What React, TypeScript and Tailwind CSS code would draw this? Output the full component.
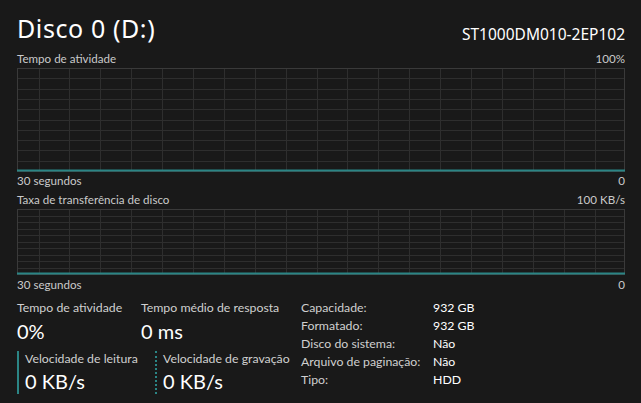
import React from 'react';

const FONT = { fontFamily: 'Lato, "Noto Sans", sans-serif' };
const HEAD = { fontFamily: '"Noto Sans", "Open Sans", sans-serif' };

interface GraphProps {
  height: number;
  rows: number;
}

const Graph: React.FC<GraphProps> = ({ height, rows }) => {
  const width = 608;
  const cols: number[] = [];
  for (let x = 21.5; x < width - 2; x += 30.9) cols.push(Math.round(x) + 0.5);
  const step = (height - 1) / rows;
  const lines: number[] = [];
  for (let i = 1; i < rows; i++) lines.push(Math.round(i * step) + 0.5);

  return (
    <svg width={width} height={height} className="block">
      {cols.map((x) => (
        <line key={'c' + x} x1={x} y1={0} x2={x} y2={height} stroke="#2e2e2e" strokeWidth={1} />
      ))}
      {lines.map((y) => (
        <line key={'r' + y} x1={0} y1={y} x2={width} y2={y} stroke="#2e2e2e" strokeWidth={1} />
      ))}
      <rect x={0.5} y={0.5} width={width - 1} height={height - 1} fill="none" stroke="#3a3a3a" strokeWidth={1} />
      <line x1={0} y1={height - 1.5} x2={width} y2={height - 1.5} stroke="#2b8585" strokeWidth={2} />
    </svg>
  );
};

const Caption: React.FC<{ left: string; right: string; className?: string }> = ({ left, right, className }) => (
  <div className={`flex justify-between text-[11.6px] leading-[14px] text-[#cacaca] ${className ?? ''}`}>
    <span>{left}</span>
    <span>{right}</span>
  </div>
);

const details: [string, string][] = [
  ['Capacidade:', '932 GB'],
  ['Formatado:', '932 GB'],
  ['Disco do sistema:', 'Não'],
  ['Arquivo de paginação:', 'Não'],
  ['Tipo:', 'HDD'],
];

export default function App() {
  return (
    <div className="w-[641px] h-[403px] overflow-hidden bg-[#191919] pl-[17px] pr-[16px]" style={FONT}>
      {/* Header */}
      <div className="flex justify-between h-[52px]" style={HEAD}>
        <div className="pt-[12px] text-[25px] leading-[32px] tracking-[0.6px] text-white">Disco 0 (D:)</div>
        <div className="pt-[24px] text-[15.5px] leading-[20px] text-white">ST1000DM010-2EP102</div>
      </div>

      <Caption left="Tempo de atividade" right="100%" />
      <div className="mt-[2px]">
        <Graph height={104} rows={10} />
      </div>
      <Caption left="30 segundos" right="0" className="mt-[2px]" />

      <Caption left="Taxa de transferência de disco" right="100 KB/s" className="mt-[5px]" />
      <div className="mt-[2px]">
        <Graph height={66} rows={10} />
      </div>
      <Caption left="30 segundos" right="0" className="mt-[3px]" />

      {/* Stats */}
      <div className="flex mt-[8px]">
        <div className="w-[284px] shrink-0">
          <div className="flex">
            <div className="w-[124px]">
              <div className="text-[12.3px] leading-[16px] text-[#d0d0d0]">Tempo de atividade</div>
              <div className="mt-[2px] text-[20px] leading-[26px] text-white">0%</div>
            </div>
            <div className="whitespace-nowrap">
              <div className="text-[12.3px] leading-[16px] text-[#d0d0d0]">Tempo médio de resposta</div>
              <div className="mt-[2px] text-[20px] leading-[26px] text-white">0 ms</div>
            </div>
          </div>
          <div className="flex mt-[7px]">
            <div className="w-[138px] shrink-0 border-l-2 border-[#2b8585] pl-[6px]">
              <div className="text-[12.3px] leading-[16px] text-[#d0d0d0]">Velocidade de leitura</div>
              <div className="mt-[1px] text-[20px] leading-[26px] text-white">0 KB/s</div>
            </div>
            <div className="whitespace-nowrap border-l-2 border-dotted border-[#2b8585] pl-[6px]">
              <div className="text-[12.3px] leading-[16px] text-[#d0d0d0]">Velocidade de gravação</div>
              <div className="mt-[1px] text-[20px] leading-[26px] text-white">0 KB/s</div>
            </div>
          </div>
        </div>
        <div className="-mt-[1px] text-[12.3px] leading-[18px]">
          {details.map(([k, v]) => (
            <div key={k} className="flex whitespace-nowrap">
              <span className="w-[132px] shrink-0 text-[#d0d0d0]">{k}</span>
              <span className="text-white">{v}</span>
            </div>
          ))}
        </div>
      </div>
    </div>
  );
}
